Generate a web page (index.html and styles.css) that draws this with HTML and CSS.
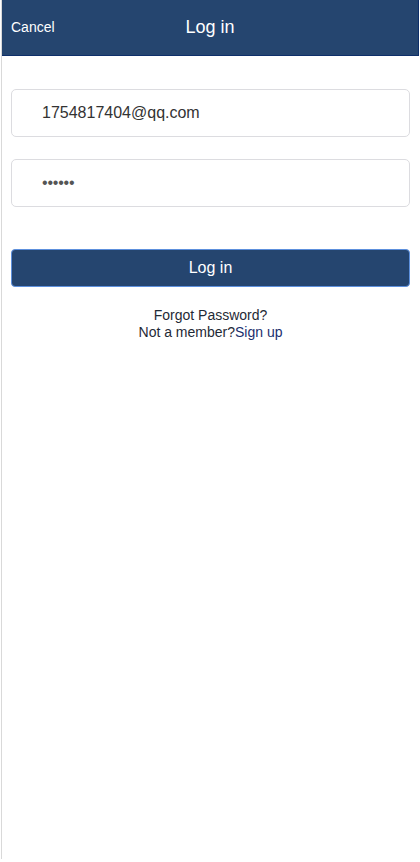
FILE: index.html
```html
<!DOCTYPE html>
<html>
<head>
<meta charset="utf-8">
<link rel="stylesheet" href="styles.css">
</head>
<body>
<div class="app">
  <header class="bar">
    <span class="cancel">Cancel</span>
    <h1 class="title">Log in</h1>
  </header>
  <main class="form">
    <div class="field"><span class="val">1754817404@qq.com</span></div>
    <div class="field"><span class="dots">••••••</span></div>
    <button class="btn">Log in</button>
    <div class="links">
      <div class="forgot">Forgot Password?</div>
      <div class="member">Not a member?<span class="signup">Sign up</span></div>
    </div>
  </main>
</div>
</body>
</html>
```
FILE: styles.css
```css
* { box-sizing: border-box; }
html, body { margin: 0; padding: 0; background: #fff; }
body { font-family: "Liberation Sans", Arial, sans-serif; }
.app {
  margin-left: 1px;
  width: 418px;
  height: 859px;
  border-left: 1px solid #d9d9d9;
  display: flex;
  flex-direction: column;
}
.bar {
  height: 56px;
  background: #25456f;
  border-bottom: 1px solid #0e2f6a;
  border-right: 1px solid #0e2f6a;
  position: relative;
  display: flex;
  align-items: center;
  justify-content: center;
}
.cancel {
  position: absolute;
  left: 9px;
  top: 19px;
  color: #fff;
  font-size: 14px;
}
.title {
  margin: 0;
  color: #fff;
  font-size: 18px;
  font-weight: normal;
  margin-top: -1px;
}
.form {
  padding: 33px 9px 0 9px;
  display: flex;
  flex-direction: column;
}
.field {
  height: 48px;
  border: 1px solid #dcdce0;
  border-radius: 5px;
  padding-left: 30px;
  display: flex;
  align-items: center;
  margin-bottom: 22px;
}
.val { color: #333; font-size: 16px; }
.dots { color: #555; font-size: 16px; letter-spacing: -0.2px; }
.btn {
  margin-top: 20px;
  height: 38px;
  background: #25456f;
  border: 1px solid #5d90dd;
  border-radius: 4px;
  color: #fff;
  font-family: "Liberation Sans", Arial, sans-serif;
  font-size: 16px;
  padding: 0;
}
.links {
  margin-top: 20px;
  text-align: center;
  font-size: 14px;
  line-height: 17px;
  color: #1f2a36;
}
.signup { color: #1b2f6e; }
```
